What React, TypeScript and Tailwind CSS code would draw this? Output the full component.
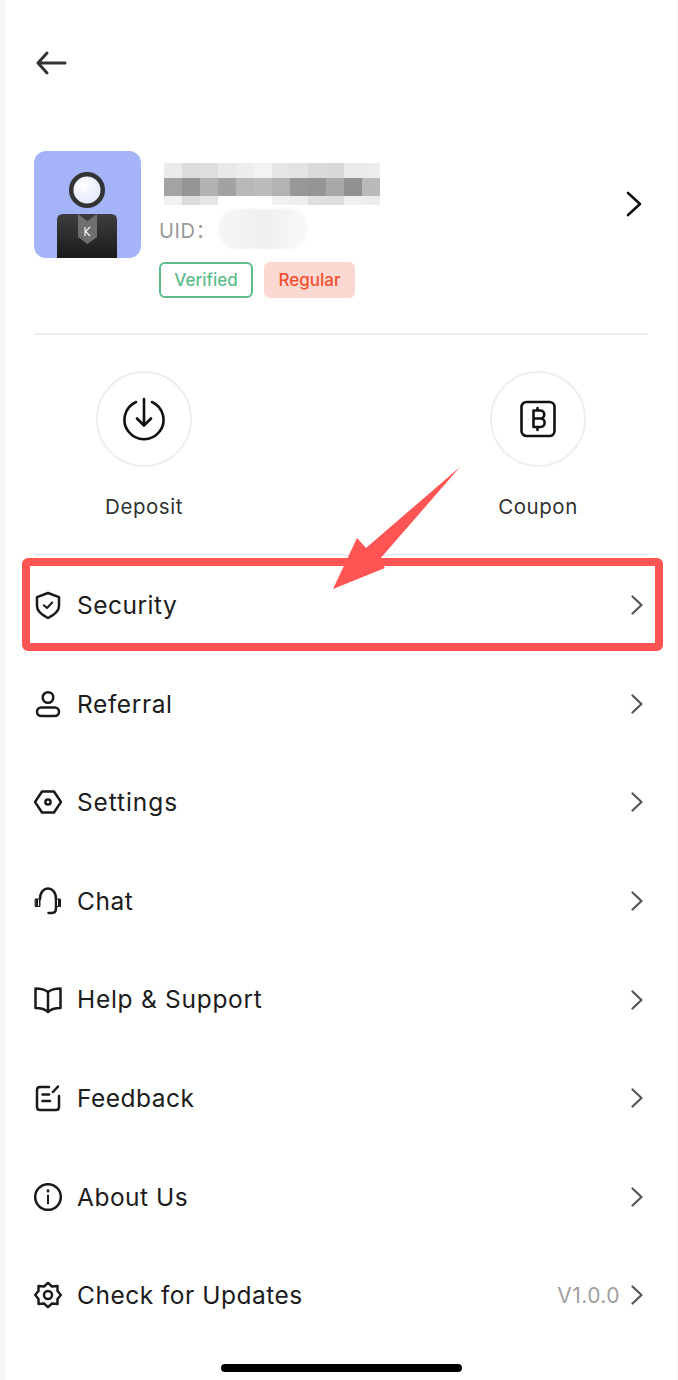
import React from "react";

const mosaic = [
  ["bg-[#ebebeb]","bg-[#dcdcdc]","bg-[#dedede]","bg-[#e9e9e9]","bg-[#eeeeee]","bg-[#f3f3f3]","bg-[#e5e5e5]","bg-[#e3e3e3]","bg-[#dadada]","bg-[#d8d8d8]","bg-[#ebebeb]","bg-[#ececec]"],
  ["bg-[#a3a3a3]","bg-[#959595]","bg-[#b2b2b2]","bg-[#a2a2a2]","bg-[#b8b8b8]","bg-[#bcbcbc]","bg-[#b3b3b3]","bg-[#979797]","bg-[#959595]","bg-[#a8a8a8]","bg-[#919191]","bg-[#bababa]"],
  ["bg-[#f1f1f1]","bg-[#dcdcdc]","bg-[#e4e4e4]","bg-white","bg-white","bg-white","bg-[#f0f0f0]","bg-[#eeeeee]","bg-[#e0e0e0]","bg-[#dedede]","bg-[#f0f0f0]","bg-[#ececec]"],
];

const S = { fill: "none", stroke: "#1a1a1a", strokeWidth: 2.5, strokeLinecap: "round", strokeLinejoin: "round" } as const;

function Chevron() {
  return (
    <svg width="14" height="20" viewBox="0 0 14 20" fill="none" stroke="#555555" strokeWidth="2.2" strokeLinecap="round" strokeLinejoin="round">
      <path d="M2.5 1.5 L11.5 10 L2.5 18.5" />
    </svg>
  );
}

const icons: Record<string, React.ReactNode> = {
  Security: (
    <>
      <path d="M14 2 L25 6.2 V15 C25 20 20 24 14 27 C8 24 3 20 3 15 V6.2 Z" />
      <path d="M9.8 14.2 L13 17 L18.2 11.5" strokeWidth="2" />
    </>
  ),
  Referral: (
    <>
      <circle cx="14" cy="7.5" r="5.3" />
      <rect x="3" y="17.5" width="22" height="8.5" rx="4.2" />
    </>
  ),
  Settings: (
    <>
      <path d="M8 3.5 H20 L27 14 L20 24.5 H8 L1 14 Z" />
      <circle cx="14" cy="14" r="2.6" />
    </>
  ),
  Chat: (
    <>
      <path d="M6 12 C6 -2 22 -2 22 12 V21 C22 24 20.5 26 18 26 H14.5" />
      <path d="M1.5 12 H6 V19.5 H1.5 Z" fill="#1a1a1a" strokeWidth="1" />
      <path d="M22 12 H26.5 V19.5 H22 Z" fill="#1a1a1a" strokeWidth="1" />
      <path d="M4 12.5 H5 V19 H4 Z" fill="#ffffff" stroke="none" />
      <path d="M23 12.5 H24 V19 H23 Z" fill="#ffffff" stroke="none" />
    </>
  ),
  "Help & Support": (
    <>
      <path d="M14 6 C11 3.5 6 2.5 1.5 2.5 V22 C6 22 11 23 14 26 C17 23 22 22 26.5 22 V2.5 C22 2.5 17 3.5 14 6 Z" />
      <path d="M14 6 V25.5" />
    </>
  ),
  Feedback: (
    <>
      <path d="M15 3 H6 C4 3 3 4 3 6 V23 C3 25 4 26 6 26 H22 C24 26 25 25 25 23 V12" />
      <path d="M8.5 10.5 H15" />
      <path d="M8.5 17 H16" />
      <path d="M19 8 L24 2.5" />
    </>
  ),
  "About Us": (
    <>
      <circle cx="14" cy="14" r="12.8" />
      <path d="M14 12.5 V20.5" strokeWidth="2" />
      <path d="M14 7.5 V8.2" strokeWidth="2.6" />
    </>
  ),
  "Check for Updates": (
    <>
      <path d="M14 1.8 L18 5.5 L23.5 5 L23.5 10 L26.8 14 L23.5 18 L23.5 23 L18 22.5 L14 26.2 L10 22.5 L4.5 23 L4.5 18 L1.2 14 L4.5 10 L4.5 5 L10 5.5 Z" />
      <circle cx="14" cy="14" r="4" />
    </>
  ),
};

const rows = [
  { label: "Security", track: "tracking-[0.5px]" },
  { label: "Referral", track: "tracking-[0.6px]" },
  { label: "Settings", track: "tracking-[0.9px]" },
  { label: "Chat", track: "tracking-[0.5px]" },
  { label: "Help & Support", track: "tracking-[0.72px]" },
  { label: "Feedback", track: "tracking-[0.5px]" },
  { label: "About Us", track: "tracking-[0.5px]" },
];

function Row({ label, track, version }: { label: string; track: string; version?: string }) {
  return (
    <div className="flex h-[98.6px] items-center pr-[4px]">
      <svg width="28" height="28" viewBox="0 0 28 28" {...S} className="shrink-0">
        {icons[label]}
      </svg>
      <span className={`ml-[15px] flex-1 text-[24.5px] leading-none text-[#1c1c1c] ${track}`}>{label}</span>
      {version && <span className="mr-[10px] text-[21px] leading-none tracking-[0.45px] text-[#a0a0a0]">{version}</span>}
      <Chevron />
    </div>
  );
}

function Action({ label, icon }: { label: string; icon: React.ReactNode }) {
  return (
    <div className="flex w-[96px] flex-col items-center">
      <div className="flex h-[96px] w-[96px] items-center justify-center rounded-full border-2 border-[#eeeeee]">{icon}</div>
      <span className="mt-[26px] whitespace-nowrap text-[20.5px] leading-[28px] tracking-[0.55px] text-[#333333]">{label}</span>
    </div>
  );
}

export default function App() {
  return (
    <div className="relative h-[1380px] w-[678px] overflow-hidden bg-[#f6f6f6] font-['Inter','Liberation_Sans','Noto_Sans_CJK_SC',sans-serif]">
      <div className="ml-[5px] mr-[1px] h-full bg-white pl-[29px] pr-[29px]">
        <div className="flex h-[151px] items-start pt-[49px]">
          <svg width="34" height="28" viewBox="0 0 34 28" fill="none" stroke="#333333" strokeWidth="3" strokeLinecap="round" strokeLinejoin="round">
            <path d="M31 14 H4 M13 4 L4 14 L13 24" />
          </svg>
        </div>

        <div className="flex h-[184px] items-start border-b-2 border-[#eeeeee]">
          <div className="relative h-[107px] w-[107px] shrink-0 overflow-hidden rounded-[12px] bg-[#a5b4f8]">
            <svg width="107" height="107" viewBox="0 0 107 107">
              <defs>
                <radialGradient id="h" cx="0.4" cy="0.35" r="0.8">
                  <stop offset="0" stopColor="#ffffff" />
                  <stop offset="1" stopColor="#d9e0fb" />
                </radialGradient>
                <linearGradient id="b" x1="0" y1="0" x2="0" y2="1">
                  <stop offset="0" stopColor="#3e3e3e" />
                  <stop offset="1" stopColor="#1a1a1a" />
                </linearGradient>
              </defs>
              <circle cx="53" cy="39" r="15.8" fill="url(#h)" stroke="#333333" strokeWidth="4.5" />
              <path d="M23 107 V69 Q23 63 29 63 H77 Q83 63 83 69 V107 Z" fill="url(#b)" />
              <path d="M44 63 L53.5 70 L63 63 V86 L53.5 93 L44 86 Z" fill="#6f6f6f" />
              <path d="M51 76 V85 M56 76 L51.5 80.5 L56 85" stroke="#ffffff" strokeWidth="1.1" fill="none" />
            </svg>
          </div>
          <div className="ml-[18px] flex flex-col">
            <div className="ml-[5px] mt-[12px] grid w-[216px] grid-cols-12 grid-rows-[15px_18px_9px]">
              {mosaic.flat().map((c, i) => (
                <div key={i} className={c} />
              ))}
            </div>
            <div className="relative mt-[5px] flex h-[42px] items-center">
              <span className="text-[20px] leading-none tracking-[0.6px] text-[#999999]">UID：</span>
              <span className="absolute left-[60px] top-[9px] text-[20px] leading-none text-[#999999]">2</span>
              <span className="absolute left-[59px] top-[-1px] h-[40px] w-[90px] rounded-[20px] bg-linear-to-r from-[#f7f7f7] via-[#efefef] to-[#f9f9f9] blur-[1px]" />
            </div>
            <div className="mt-[10px] flex gap-[11px]">
              <span className="flex h-[36px] w-[94px] items-center justify-center rounded-[6px] border-2 border-[#5dbd8d] text-[17px] font-medium leading-none text-[#5dbd8d]">Verified</span>
              <span className="flex h-[36px] w-[91px] items-center justify-center rounded-[6px] bg-[#fbd9d2] text-[17px] font-medium leading-none text-[#f0502f]">Regular</span>
            </div>
          </div>
          <svg width="20" height="28" viewBox="0 0 20 28" fill="none" stroke="#111111" strokeWidth="2.6" strokeLinecap="round" strokeLinejoin="round" className="ml-auto mr-[4px] mt-[39px]">
            <path d="M4 3 L16 14 L4 25" />
          </svg>
        </div>

        <div className="flex h-[221px] items-start justify-between border-b-2 border-[#eeeeee] px-[62px] pt-[36px]">
          <Action
            label="Deposit"
            icon={
              <svg width="44" height="44" viewBox="0 0 44 44" fill="none" stroke="#111111" strokeWidth="2.6" strokeLinecap="round" strokeLinejoin="round">
                <path d="M14 5 A19.5 19.5 0 1 0 30 5" />
                <path d="M22 2 V28 M15 21.5 L22 28.5 L29 21.5" />
              </svg>
            }
          />
          <Action
            label="Coupon"
            icon={
              <svg width="38" height="38" viewBox="0 0 38 38" fill="none" stroke="#111111" strokeWidth="2.6" strokeLinecap="round" strokeLinejoin="round">
                <rect x="2.5" y="2" width="33" height="34" rx="5" />
                <path d="M14.5 10.5 H21.5 C26.5 10.5 26.5 18.5 21.5 18.5 H14.5 M21.5 18.5 C27 18.5 27 27 21.5 27 H14.5 M14.5 10.5 V27 M18.5 8 V10.5 M18.5 27 V30" />
              </svg>
            }
          />
        </div>

        <div>
          {rows.map((r) => (
            <Row key={r.label} label={r.label} track={r.track} />
          ))}
          <Row label="Check for Updates" track="tracking-[0.5px]" version="V1.0.0" />
        </div>
      </div>

      <div className="absolute bottom-[8px] left-[221px] h-[8px] w-[241px] rounded-full bg-black" />

      <div className="absolute left-[22px] top-[558px] h-[93px] w-[641px] rounded-[6px] border-[8px] border-[#ff5454]" />
      <svg width="678" height="1380" viewBox="0 0 678 1380" className="pointer-events-none absolute left-0 top-0">
        <polygon points="460,467 366,548 357,538 333,589 385,568 379,560" fill="#ff5454" />
      </svg>
    </div>
  );
}
